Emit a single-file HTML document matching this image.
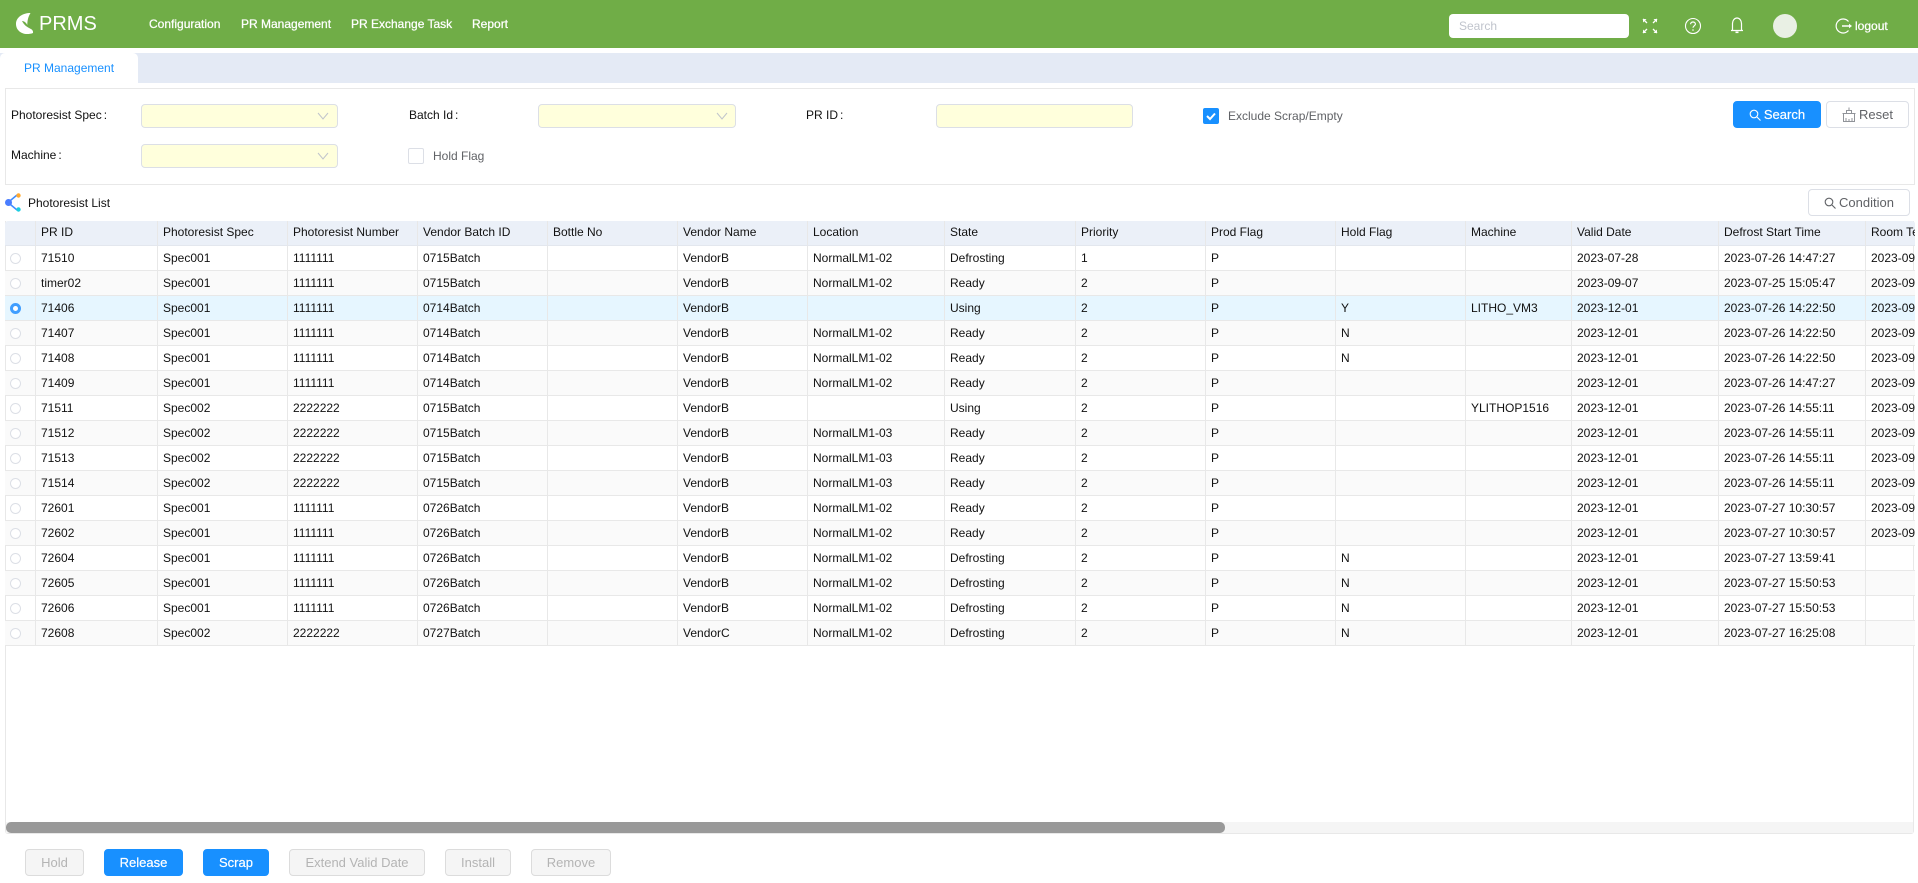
<!DOCTYPE html>
<html><head><meta charset="utf-8"><title>PRMS</title>
<style>
*{box-sizing:border-box}
html,body{margin:0;padding:0;width:1918px;height:883px;overflow:hidden;background:#fff;font:12px "Liberation Sans",Arial,sans-serif;color:#111}
.a{position:absolute}
.t{position:absolute;white-space:nowrap;line-height:16px}
.nav{color:#fff;-webkit-text-stroke:.25px #fff;top:16px}
.lab{color:#111}
.lab b{font-weight:400;margin-left:2px}
.inp{position:absolute;height:24px;background:#ffffdc;border:1px solid #dcdfe6;border-radius:4px}
.btn{position:absolute;height:27px;border-radius:4px;text-align:center;line-height:25px;border:1px solid #dcdfe6;color:#606266;background:#fff;white-space:nowrap;font-size:13px}
.pri{background:#1890ff;border-color:#1890ff;color:#fff;-webkit-text-stroke:.2px #fff}
.dis{background:#f5f5f5;border-color:#dcdcdc;color:#b4b4b4}
table{border-collapse:separate;border-spacing:0;table-layout:fixed;width:1960px}
td,th{height:25px;padding:0 0 0 5px;font-weight:400;text-align:left;white-space:nowrap;overflow:hidden;border-right:1px solid #e8e8e8;border-bottom:1px solid #e8e8e8;line-height:24px;color:#111}
th{height:25px;background:#ebf0f8;border-bottom:1px solid #e3e7ee;line-height:22px;padding-bottom:2px}
td:first-child,th:first-child{padding:0;position:relative}
tr:nth-child(even) td{background:#fafafa}
tr.s td{background:#e6f6ff}
.r{display:block;width:11px;height:11px;border-radius:50%;border:1px solid #dcdfe6;background:#fff;margin-left:5px}
.r.on{background:#409eff;border:3px solid #409eff;position:relative}
.r.on:after{content:"";position:absolute;left:0;top:0;width:5px;height:5px;background:#fff;border-radius:50%}
</style></head><body>

<div class="a" style="left:0;top:0;width:1918px;height:48px;background:#70ad47"></div>
<svg class="a" style="left:15px;top:12px" width="19" height="23" viewBox="0 0 19 23"><path d="M15.500 1C8 1 1 5 1 12 1 18 6 22 12 22c2 0 4.500-.3 6-1 .3-2-.5-3.300-3-4.500C12 15 9 13 7 9c2.500 0 4.300 2 5.300 4 0-4.500 1-8.500 3.200-12Z" fill="#fff"/></svg>
<div class="t" style="left:39px;top:12px;font-size:20px;line-height:24px;color:#fff">PRMS</div>
<div class="t nav" style="left:149px">Configuration</div>
<div class="t nav" style="left:241px">PR Management</div>
<div class="t nav" style="left:351px">PR Exchange Task</div>
<div class="t nav" style="left:472px">Report</div>

<div class="a" style="left:1449px;top:14px;width:180px;height:24px;background:#fff;border-radius:4px"></div>
<div class="t" style="left:1459px;top:18px;color:#c0c4cc">Search</div>
<svg class="a" style="left:1642px;top:18px" width="16" height="16" viewBox="0 0 16 16" fill="none" stroke="#fff"><path d="M1 1l4 4M15 1l-4 4M1 15l4-4M15 15l-4-4" stroke-width="1.300"/><path d="M1 1h3.500L1 4.500ZM15 1h-3.500L15 4.500ZM1 15h3.500L1 11.500ZM15 15h-3.500L15 11.500Z" fill="#fff" stroke="none"/></svg>
<svg class="a" style="left:1684px;top:17px" width="18" height="18" viewBox="0 0 18 18" fill="none" stroke="#fff"><circle cx="9" cy="9" r="7.500" stroke-width="1.100"/><path d="M6.600 7.200C6.600 5.800 7.700 5 9 5s2.400.9 2.400 2.100C11.400 8.800 9 8.900 9 10.800" stroke-width="1.200"/><circle cx="9" cy="13" r=".8" fill="#fff" stroke="none"/></svg>
<svg class="a" style="left:1730px;top:16px" width="14" height="18" viewBox="0 0 14 18" fill="none" stroke="#fff" stroke-width="1.200"><path d="M1 14.500h12M2.500 14.500V7.500C2.500 4.500 4.500 2 7 2s4.500 2.500 4.500 5.500v7"/><path d="M5.500 16.300h3" stroke-width="1.600"/></svg>
<div class="a" style="left:1773px;top:14px;width:24px;height:24px;border-radius:50%;background:#e9f0e4"></div>
<svg class="a" style="left:1835px;top:18px" width="18" height="16" viewBox="0 0 18 16" fill="none" stroke="#fff" stroke-width="1.200"><path d="M13.500 3.500A7 7 0 1 0 13.500 12.500"/><path d="M7 8h8" stroke-width="1.500"/><path d="M14 5.800L17 8l-3 2.200Z" fill="#fff" stroke="none"/></svg>
<div class="t nav" style="left:1855px;top:18px">logout</div>

<div class="a" style="left:0;top:53px;width:1918px;height:30px;background:#e4eaf5"></div>
<div class="a" style="left:0;top:53px;width:138px;height:30px;background:#fff;border-radius:5px 5px 0 0"></div>
<div class="t" style="left:24px;top:60px;color:#1890ff">PR Management</div>

<div class="a" style="left:5px;top:88px;width:1910px;height:97px;border:1px solid #e8e8e8"></div>
<div class="t lab" style="left:11px;top:107px">Photoresist Spec<b>:</b></div>
<div class="inp" style="left:141px;top:104px;width:197px"></div>
<svg class="a" style="left:317px;top:111px" width="12" height="10" fill="none" stroke="#c0c4cc"><path d="M1 2l5 6 5-6"/></svg>
<div class="t lab" style="left:409px;top:107px">Batch Id<b>:</b></div>
<div class="inp" style="left:538px;top:104px;width:198px"></div>
<svg class="a" style="left:716px;top:111px" width="12" height="10" fill="none" stroke="#c0c4cc"><path d="M1 2l5 6 5-6"/></svg>
<div class="t lab" style="left:806px;top:107px">PR ID<b>:</b></div>
<div class="inp" style="left:936px;top:104px;width:197px"></div>
<div class="a" style="left:1203px;top:108px;width:16px;height:16px;border-radius:2px;background:#1890ff"></div>
<svg class="a" style="left:1203px;top:108px" width="16" height="16" fill="none" stroke="#fff" stroke-width="2"><path d="M4 8l3 3 5-5.500"/></svg>
<div class="t" style="left:1228px;top:108px;color:#606266">Exclude Scrap/Empty</div>
<div class="btn pri" style="left:1733px;top:101px;width:88px"><svg width="12" height="12" viewBox="0 0 12 12" fill="none" stroke="#fff" stroke-width="1.100" style="vertical-align:-2px;margin-right:3px"><circle cx="5" cy="5" r="3.800"/><path d="M8 8l3.500 3.500"/></svg>Search</div>
<div class="btn" style="left:1826px;top:101px;width:83px"><svg width="14" height="15" viewBox="0 0 14 15" fill="none" stroke="#909399" style="vertical-align:-3px;margin-right:3px"><path d="M.5 6.500h13M1.500 6.500v8h11v-8M4.500 6.500V3.500h5v3M7 3.500V.5M4 14v-3M7 14v-2M10 14v-3"/></svg>Reset</div>

<div class="t lab" style="left:11px;top:147px">Machine<b>:</b></div>
<div class="inp" style="left:141px;top:144px;width:197px"></div>
<svg class="a" style="left:317px;top:151px" width="12" height="10" fill="none" stroke="#c0c4cc"><path d="M1 2l5 6 5-6"/></svg>
<div class="a" style="left:408px;top:148px;width:16px;height:16px;border:1px solid #dcdfe6;border-radius:2px"></div>
<div class="t" style="left:433px;top:148px;color:#606266">Hold Flag</div>

<svg class="a" style="left:4px;top:192px" width="18" height="21" viewBox="0 0 18 21"><path d="M4 10.500L13 3M4 10.500L13 18" stroke="#3f8cff" stroke-width="1.500"/><circle cx="4.500" cy="10.500" r="3.500" fill="#4a7dff"/><circle cx="14.500" cy="3.500" r="2.200" fill="#ffa930"/><circle cx="14.500" cy="17.500" r="2.200" fill="#1ccfe0"/></svg>
<div class="t" style="left:28px;top:195px">Photoresist List</div>
<div class="btn" style="left:1808px;top:189px;width:102px"><svg width="12" height="12" viewBox="0 0 12 12" fill="none" stroke="#606266" stroke-width="1.100" style="vertical-align:-2px;margin-right:3px"><circle cx="5" cy="5" r="3.800"/><path d="M8 8l3.500 3.500"/></svg>Condition</div>

<div class="a" style="left:5px;top:221px;width:1909px;height:613px;border-left:1px solid #e8e8e8;border-right:1px solid #e8e8e8;border-bottom:1px solid #e8e8e8;border-radius:0 0 3px 3px"></div>
<div class="a" style="left:5px;top:221px;width:1910px;height:425px;overflow:hidden;border-radius:3px 3px 0 0">
<table>
<colgroup><col style="width:31px"><col style="width:122px"><col style="width:130px"><col style="width:130px"><col style="width:130px"><col style="width:130px"><col style="width:130px"><col style="width:137px"><col style="width:131px"><col style="width:130px"><col style="width:130px"><col style="width:130px"><col style="width:106px"><col style="width:147px"><col style="width:147px"><col style="width:100px"></colgroup>
<thead><tr><th></th><th>PR ID</th><th>Photoresist Spec</th><th>Photoresist Number</th><th>Vendor Batch ID</th><th>Bottle No</th><th>Vendor Name</th><th>Location</th><th>State</th><th>Priority</th><th>Prod Flag</th><th>Hold Flag</th><th>Machine</th><th>Valid Date</th><th>Defrost Start Time</th><th>Room Temp Start Time</th></tr></thead>
<tbody>
<tr><td><i class="r"></i></td><td>71510</td><td>Spec001</td><td>1111111</td><td>0715Batch</td><td></td><td>VendorB</td><td>NormalLM1-02</td><td>Defrosting</td><td>1</td><td>P</td><td></td><td></td><td>2023-07-28</td><td>2023-07-26 14:47:27</td><td>2023-09-01 10:00:00</td></tr>
<tr><td><i class="r"></i></td><td>timer02</td><td>Spec001</td><td>1111111</td><td>0715Batch</td><td></td><td>VendorB</td><td>NormalLM1-02</td><td>Ready</td><td>2</td><td>P</td><td></td><td></td><td>2023-09-07</td><td>2023-07-25 15:05:47</td><td>2023-09-01 10:00:00</td></tr>
<tr class="s"><td><i class="r on"></i></td><td>71406</td><td>Spec001</td><td>1111111</td><td>0714Batch</td><td></td><td>VendorB</td><td></td><td>Using</td><td>2</td><td>P</td><td>Y</td><td>LITHO_VM3</td><td>2023-12-01</td><td>2023-07-26 14:22:50</td><td>2023-09-01 10:00:00</td></tr>
<tr><td><i class="r"></i></td><td>71407</td><td>Spec001</td><td>1111111</td><td>0714Batch</td><td></td><td>VendorB</td><td>NormalLM1-02</td><td>Ready</td><td>2</td><td>P</td><td>N</td><td></td><td>2023-12-01</td><td>2023-07-26 14:22:50</td><td>2023-09-01 10:00:00</td></tr>
<tr><td><i class="r"></i></td><td>71408</td><td>Spec001</td><td>1111111</td><td>0714Batch</td><td></td><td>VendorB</td><td>NormalLM1-02</td><td>Ready</td><td>2</td><td>P</td><td>N</td><td></td><td>2023-12-01</td><td>2023-07-26 14:22:50</td><td>2023-09-01 10:00:00</td></tr>
<tr><td><i class="r"></i></td><td>71409</td><td>Spec001</td><td>1111111</td><td>0714Batch</td><td></td><td>VendorB</td><td>NormalLM1-02</td><td>Ready</td><td>2</td><td>P</td><td></td><td></td><td>2023-12-01</td><td>2023-07-26 14:47:27</td><td>2023-09-01 10:00:00</td></tr>
<tr><td><i class="r"></i></td><td>71511</td><td>Spec002</td><td>2222222</td><td>0715Batch</td><td></td><td>VendorB</td><td></td><td>Using</td><td>2</td><td>P</td><td></td><td>YLITHOP1516</td><td>2023-12-01</td><td>2023-07-26 14:55:11</td><td>2023-09-01 10:00:00</td></tr>
<tr><td><i class="r"></i></td><td>71512</td><td>Spec002</td><td>2222222</td><td>0715Batch</td><td></td><td>VendorB</td><td>NormalLM1-03</td><td>Ready</td><td>2</td><td>P</td><td></td><td></td><td>2023-12-01</td><td>2023-07-26 14:55:11</td><td>2023-09-01 10:00:00</td></tr>
<tr><td><i class="r"></i></td><td>71513</td><td>Spec002</td><td>2222222</td><td>0715Batch</td><td></td><td>VendorB</td><td>NormalLM1-03</td><td>Ready</td><td>2</td><td>P</td><td></td><td></td><td>2023-12-01</td><td>2023-07-26 14:55:11</td><td>2023-09-01 10:00:00</td></tr>
<tr><td><i class="r"></i></td><td>71514</td><td>Spec002</td><td>2222222</td><td>0715Batch</td><td></td><td>VendorB</td><td>NormalLM1-03</td><td>Ready</td><td>2</td><td>P</td><td></td><td></td><td>2023-12-01</td><td>2023-07-26 14:55:11</td><td>2023-09-01 10:00:00</td></tr>
<tr><td><i class="r"></i></td><td>72601</td><td>Spec001</td><td>1111111</td><td>0726Batch</td><td></td><td>VendorB</td><td>NormalLM1-02</td><td>Ready</td><td>2</td><td>P</td><td></td><td></td><td>2023-12-01</td><td>2023-07-27 10:30:57</td><td>2023-09-01 10:00:00</td></tr>
<tr><td><i class="r"></i></td><td>72602</td><td>Spec001</td><td>1111111</td><td>0726Batch</td><td></td><td>VendorB</td><td>NormalLM1-02</td><td>Ready</td><td>2</td><td>P</td><td></td><td></td><td>2023-12-01</td><td>2023-07-27 10:30:57</td><td>2023-09-01 10:00:00</td></tr>
<tr><td><i class="r"></i></td><td>72604</td><td>Spec001</td><td>1111111</td><td>0726Batch</td><td></td><td>VendorB</td><td>NormalLM1-02</td><td>Defrosting</td><td>2</td><td>P</td><td>N</td><td></td><td>2023-12-01</td><td>2023-07-27 13:59:41</td><td></td></tr>
<tr><td><i class="r"></i></td><td>72605</td><td>Spec001</td><td>1111111</td><td>0726Batch</td><td></td><td>VendorB</td><td>NormalLM1-02</td><td>Defrosting</td><td>2</td><td>P</td><td>N</td><td></td><td>2023-12-01</td><td>2023-07-27 15:50:53</td><td></td></tr>
<tr><td><i class="r"></i></td><td>72606</td><td>Spec001</td><td>1111111</td><td>0726Batch</td><td></td><td>VendorB</td><td>NormalLM1-02</td><td>Defrosting</td><td>2</td><td>P</td><td>N</td><td></td><td>2023-12-01</td><td>2023-07-27 15:50:53</td><td></td></tr>
<tr><td><i class="r"></i></td><td>72608</td><td>Spec002</td><td>2222222</td><td>0727Batch</td><td></td><td>VendorC</td><td>NormalLM1-02</td><td>Defrosting</td><td>2</td><td>P</td><td>N</td><td></td><td>2023-12-01</td><td>2023-07-27 16:25:08</td><td></td></tr>
</tbody></table></div>

<div class="a" style="left:6px;top:822px;width:1907px;height:11px;background:#f5f5f5"></div>
<div class="a" style="left:6px;top:822px;width:1219px;height:11px;background:#999;border-radius:5px"></div>

<div class="btn dis" style="left:25px;top:849px;width:59px">Hold</div>
<div class="btn pri" style="left:104px;top:849px;width:79px">Release</div>
<div class="btn pri" style="left:203px;top:849px;width:66px">Scrap</div>
<div class="btn dis" style="left:289px;top:849px;width:136px">Extend Valid Date</div>
<div class="btn dis" style="left:445px;top:849px;width:66px">Install</div>
<div class="btn dis" style="left:531px;top:849px;width:80px">Remove</div>
</body></html>
